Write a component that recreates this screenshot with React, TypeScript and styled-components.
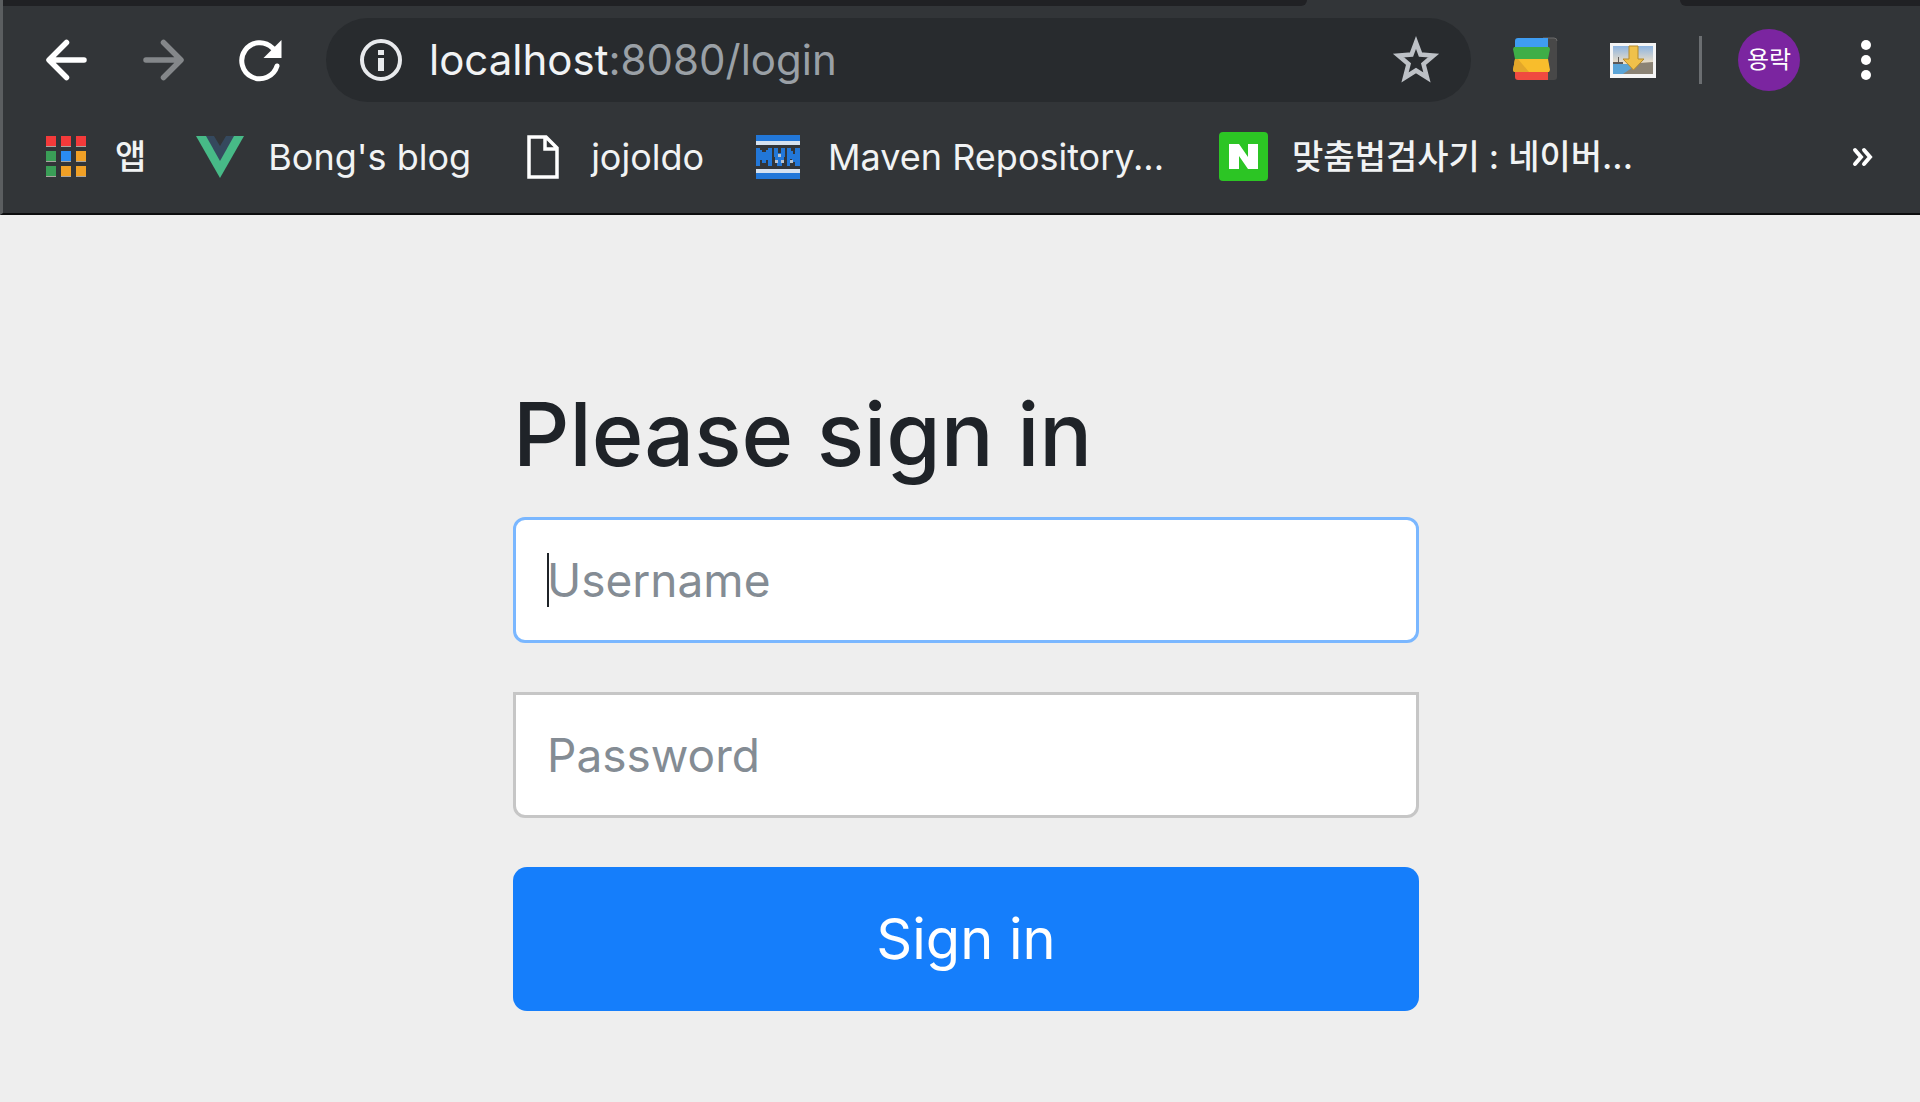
import React from 'react';
import styled, { createGlobalStyle } from 'styled-components';

const sans = `Inter, "Noto Sans CJK KR", sans-serif`;

const GlobalStyle = createGlobalStyle`
  * { box-sizing: border-box; }
  html, body, #root { height: 100%; }
  body { margin: 0; background: #eeeeee; font-family: ${sans}; }
  button, input { font-family: inherit; }
`;

const Page = styled.div`
  min-height: 100%;
  display: flex;
  flex-direction: column;
`;

const Chrome = styled.header`
  background: #323538;
  border-left: 3px solid #5b5e60;
  border-bottom: 2px solid #0c0d0e;
`;

const TabStrip = styled.div`
  display: flex;
  justify-content: space-between;
  height: 6px;
`;

const TabGroup = styled.div<{ $side: 'left' | 'right' }>`
  width: ${p => (p.$side === 'left' ? '68%' : '12.5%')};
  background: #202124;
  border-radius: ${p => (p.$side === 'left' ? '0 0 16px 0' : '0 0 0 16px')};
`;

const Toolbar = styled.div`
  display: flex;
  align-items: center;
  padding: 12px 44px 12px 40px;
`;

const IconButton = styled.button<{ $gap?: number }>`
  display: flex;
  flex: none;
  padding: 0;
  margin: 0 ${p => p.$gap ?? 0}px 0 0;
  border: 0;
  background: none;
  svg { display: block; }
`;

const AddressBar = styled.div`
  flex: 1;
  display: flex;
  align-items: center;
  height: 84px;
  padding: 0 31px;
  margin-right: 42px;
  border-radius: 42px;
  background: #282b2e;
`;

const Url = styled.div`
  flex: 1;
  margin-left: 24px;
  color: #9aa0a6;
  font-size: 42px;
  line-height: 52px;
  b { color: #f1f3f4; font-weight: 400; }
`;

const Divider = styled.div`
  width: 3px;
  height: 48px;
  margin: 0 36px 0 42px;
  background: #6b6e71;
`;

const Avatar = styled.button`
  width: 62px;
  height: 62px;
  padding: 0;
  margin-right: 56px;
  border: 0;
  border-radius: 50%;
  background: #7b25a0;
  color: #fff;
  font-size: 24px;
  line-height: 24px;
`;

const Bookmarks = styled.nav`
  display: flex;
  align-items: center;
  height: 99px;
  padding: 0 46px 14px 42px;
`;

const Bookmark = styled.a<{ $gap: number; $space: number; $korean?: boolean }>`
  display: flex;
  align-items: center;
  gap: ${p => p.$gap}px;
  margin-right: ${p => p.$space}px;
  color: #f1f3f4;
  font-size: ${p => (p.$korean ? 34 : 36)}px;
  font-weight: ${p => (p.$korean ? 500 : 400)};
  line-height: 48px;
  text-decoration: none;
  white-space: nowrap;
  svg { flex: none; }
`;

const Overflow = styled(IconButton)`
  margin-left: auto;
`;

const Main = styled.main`
  flex: 1;
  display: flex;
  justify-content: center;
  padding: 161px 20px 60px 32px;
`;

const Form = styled.form`
  width: 906px;
  display: flex;
  flex-direction: column;
`;

const Title = styled.h1`
  margin: 0 0 25px;
  color: #1f2328;
  font-size: 88px;
  line-height: 116px;
  font-weight: 500;
`;

const Field = styled.div`
  position: relative;
  margin-bottom: 49px;
`;

const Input = styled.input<{ $active?: boolean }>`
  display: block;
  width: 100%;
  height: 126px;
  padding: 0 31px;
  border: 3px solid ${p => (p.$active ? '#7ab7ff' : '#c6c6c6')};
  border-radius: ${p => (p.$active ? '12px' : '0 0 12px 12px')};
  background: #fff;
  color: #1f2328;
  font-size: 46px;
  outline: none;
  &::placeholder { color: #848c94; opacity: 1; }
`;

const Caret = styled.span`
  position: absolute;
  left: 34px;
  top: 36px;
  width: 2px;
  height: 54px;
  background: #1f2328;
`;

const Submit = styled.button`
  height: 144px;
  border: 0;
  border-radius: 14px;
  background: #157efb;
  color: #fff;
  font-size: 56px;
`;

const BackIcon = () => (
  <svg width="50" height="44" viewBox="0 0 50 44" fill="none" stroke="#fff" strokeWidth="5.500" strokeLinecap="round" strokeLinejoin="round">
    <path d="M41 22H7M23.500 4.500L6 22L23.500 39.500" />
  </svg>
);

const ForwardIcon = () => (
  <svg width="50" height="44" viewBox="0 0 50 44" fill="none" stroke="#84878a" strokeWidth="5.500" strokeLinecap="round" strokeLinejoin="round">
    <path d="M6 22H40M23.500 4.500L41 22L23.500 39.500" />
  </svg>
);

const ReloadIcon = () => (
  <svg width="50" height="44" viewBox="0 0 50 44">
    <path d="M39 28A18 18 0 1 1 34.500 10L37 12.500" fill="none" stroke="#fff" strokeWidth="5" strokeLinecap="round" />
    <path d="M43.500 2V20H25.500Z" fill="#fff" />
  </svg>
);

const InfoIcon = () => (
  <svg width="48" height="48" viewBox="0 0 48 48">
    <circle cx="24" cy="24" r="19" fill="none" stroke="#e8eaed" strokeWidth="4" />
    <path d="M21 14H27V19H21ZM21 22H27V35H21Z" fill="#e8eaed" />
  </svg>
);

const StarIcon = () => (
  <svg width="48" height="48" viewBox="0 0 48 48">
    <path d="M24 6.500L28.500 18.500L41.500 19.500L31.500 28L35 41.500L24 34.500L13 41.500L16.500 28L6.500 19.500L19.500 18.500Z" fill="none" stroke="#bdc1c6" strokeWidth="4.500" />
  </svg>
);

const StackIcon = () => (
  <svg width="46" height="46" viewBox="0 0 46 46">
    <path d="M30 1H41Q44 1 44 4V40Q44 43 41 43H30Z" fill="#484848" />
    <path d="M30 1H41Q44 1 44 4" fill="none" stroke="#6a6a6a" />
    <path d="M5 1H35V12H2V4Q2 1 5 1Z" fill="#3f9df2" />
    <path d="M2 34H35V43H5Q2 43 2 40Z" fill="#f04a40" />
    <path d="M2 22H35L37 33L36 35H1L0 33Z" fill="#f8bd2c" />
    <path d="M5 22L16 35H1L0 33L2 22Z" fill="#e3a72a" />
    <path d="M1 10H36L37 12L35 22H2L0 12Z" fill="#3eae47" />
  </svg>
);

const PictureIcon = () => (
  <svg width="48" height="38" viewBox="0 0 48 38">
    <defs>
      <linearGradient id="sky" x1="0" y1="0" x2="0" y2="1">
        <stop offset="0" stopColor="#8db4e0" />
        <stop offset="1" stopColor="#f3e2c6" />
      </linearGradient>
    </defs>
    <path d="M1 2H47V37H1Z" fill="#f5f5f5" />
    <path d="M4 5H44V23H4Z" fill="url(#sky)" />
    <path d="M4 23H30V33H4Z" fill="#5ba4d6" />
    <path d="M44 21L30 22L14 33H44Z" fill="#8b8375" />
    <path d="M4 21H14V23H4ZM9 16H10V23H9Z" fill="#5f5a57" />
    <path d="M20 5H29V18H35L24.500 29L14 18H20Z" fill="#f0c14a" stroke="#b58a2a" strokeWidth="1" />
  </svg>
);

const DotsIcon = () => (
  <svg width="20" height="44" viewBox="0 0 20 44" fill="#fff">
    <circle cx="10" cy="7" r="5" /><circle cx="10" cy="22" r="5" /><circle cx="10" cy="37" r="5" />
  </svg>
);

const AppsIcon = () => (
  <svg width="42" height="42" viewBox="0 0 42 42">
    {['#f43a3a', '#f43a3a', '#f43a3a', '#3a9e57', '#2a8cf2', '#f0a026', '#3a9e57', '#f0a026', '#f0a026'].map((c, i) => (
      <g key={i}>
        <rect x={1 + (i % 3) * 15} y={Math.floor(i / 3) * 15} width="10" height="10" fill={c} />
        <rect x={1 + (i % 3) * 15} y={10 + Math.floor(i / 3) * 15} width="10" height="1" fill="#a9a5a0" />
      </g>
    ))}
  </svg>
);

const VueIcon = () => (
  <svg width="48" height="42" viewBox="0 0 48 42">
    <path d="M0 0H48L24 42Z" fill="#47ba87" />
    <path d="M10 0H38L24 25Z" fill="#35495e" />
    <path d="M18 0H30L24 10Z" fill="#323538" />
  </svg>
);

const FileIcon = () => (
  <svg width="32" height="44" viewBox="0 0 32 44" fill="none" stroke="#fff" strokeWidth="3.500">
    <path d="M2 2H19L30 13V42H2ZM18 2V14H30" />
  </svg>
);

const MavenIcon = () => (
  <svg width="44" height="44" viewBox="0 0 44 44">
    <path d="M0 0H44V6H0ZM0 38H44V44H0Z" fill="#2277d8" />
    <path d="M0 6H44V10H0ZM0 34H44V38H0Z" fill="#d6e2f0" />
    <path
      d="M0 13H4V15H6V17H10V15H12V13H16V31H12V25H10V28H6V25H4V31H0Z
         M18 13H22V18H25V13H29V22H28V28H26V31H21V28H19V22H18Z
         M31 13H35V16H37V19H39V13H44V31H39V27H36V24H34V31H31Z"
      fill="#2277d8"
    />
    <path d="M22 19H25V22H22ZM19 25H22V28H19ZM25 25H28V28H25ZM34 25H37V28H34Z" fill="#b9c3cf" />
  </svg>
);

const NaverIcon = () => (
  <svg width="49" height="49" viewBox="0 0 49 49">
    <rect width="49" height="49" rx="4" fill="#2cc524" />
    <path d="M10 12H20L29 25V12H39V37H29L20 24V37H10Z" fill="#fff" />
  </svg>
);

const ChevronsIcon = () => (
  <svg width="22" height="20" viewBox="0 0 22 20" fill="none" stroke="#fff" strokeWidth="4" strokeLinecap="round">
    <path d="M3 3L9 10L3 17M12 3L18 10L12 17" />
  </svg>
);

export default function App() {
  return (
    <Page>
      <GlobalStyle />
      <Chrome>
        <TabStrip><TabGroup $side="left" /><TabGroup $side="right" /></TabStrip>
        <Toolbar>
          <IconButton aria-label="Back" $gap={47}><BackIcon /></IconButton>
          <IconButton aria-label="Forward" $gap={48}><ForwardIcon /></IconButton>
          <IconButton aria-label="Reload" $gap={38}><ReloadIcon /></IconButton>
          <AddressBar>
            <InfoIcon />
            <Url><b>localhost</b>:8080/login</Url>
            <IconButton aria-label="Bookmark this page"><StarIcon /></IconButton>
          </AddressBar>
          <IconButton aria-label="Stack extension" $gap={50}><StackIcon /></IconButton>
          <IconButton aria-label="Image downloader"><PictureIcon /></IconButton>
          <Divider />
          <Avatar>용락</Avatar>
          <IconButton aria-label="Menu"><DotsIcon /></IconButton>
        </Toolbar>
        <Bookmarks>
          <Bookmark href="#" $gap={28} $space={50} $korean><AppsIcon />앱</Bookmark>
          <Bookmark href="#" $gap={24} $space={56}><VueIcon />Bong's blog</Bookmark>
          <Bookmark href="#" $gap={32} $space={52}><FileIcon />jojoldo</Bookmark>
          <Bookmark href="#" $gap={28} $space={55}><MavenIcon />Maven Repository...</Bookmark>
          <Bookmark href="#" $gap={24} $space={0} $korean><NaverIcon />맞춤법검사기 : 네이버...</Bookmark>
          <Overflow aria-label="More bookmarks"><ChevronsIcon /></Overflow>
        </Bookmarks>
      </Chrome>
      <Main>
        <Form onSubmit={e => e.preventDefault()}>
          <Title>Please sign in</Title>
          <Field>
            <Input type="text" aria-label="Username" placeholder="Username" $active />
            <Caret />
          </Field>
          <Field>
            <Input type="password" aria-label="Password" placeholder="Password" />
          </Field>
          <Submit type="submit">Sign in</Submit>
        </Form>
      </Main>
    </Page>
  );
}
